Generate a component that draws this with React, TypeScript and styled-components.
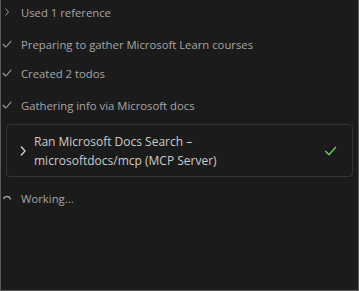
import styled, { createGlobalStyle } from "styled-components";

const GlobalStyle = createGlobalStyle`
	html, body {
		margin: 0;
		padding: 0;
		background: #1b1b1b;
	}
	* {
		box-sizing: border-box;
	}
`;

const Panel = styled.div`
	width: 359px;
	height: 291px;
	background: #1b1b1b;
	border-left: 1px solid #5a5a5a;
	border-right: 1px solid #5a5a5a;
	border-bottom: 1px solid #5a5a5a;
	font-family: "Open Sans", "Noto Sans", sans-serif;
	padding: 0 5px 0 1px;
	display: flex;
	flex-direction: column;
`;

const Step = styled.div<{ $top: number }>`
	display: flex;
	align-items: center;
	height: 20px;
	margin-top: ${(p) => p.$top}px;
	gap: 9px;
	font-size: 11.3px;
	color: #a6a6a6;
`;

const IconSlot = styled.span`
	width: 10px;
	display: flex;
	align-items: center;
	justify-content: center;
`;

const ToolCard = styled.div`
	margin: 9px 0 0 4px;
	height: 53px;
	border: 1px solid #343434;
	border-radius: 4px;
	display: flex;
	align-items: center;
	padding: 0 15px 0 11px;
	gap: 6px;
`;

const CardText = styled.div`
	flex: 1;
	font-size: 12px;
	line-height: 19px;
	color: #cccccc;
`;

const Chevron = ({ color = "#9a9a9a", big = false }: { color?: string; big?: boolean }) =>
	big ? (
		<svg width="8" height="12" viewBox="0 0 8 12">
			<path d="M2 1.5 L6 6 L2 10.5" fill="none" stroke={color} strokeWidth="1.3" />
		</svg>
	) : (
		<svg width="8" height="10" viewBox="0 0 8 10">
			<path d="M2.5 1.5 L5.5 5 L2.5 8.5" fill="none" stroke={color} strokeWidth="1" />
		</svg>
	);

const Check = ({ color = "#9a9a9a", w = 10, h = 8 }: { color?: string; w?: number; h?: number }) => (
	<svg width={w} height={h} viewBox="0 0 10 8">
		<path d="M0.8 4 L3.8 7 L9.3 0.8" fill="none" stroke={color} strokeWidth="1.1" />
	</svg>
);

const Spinner = () => (
	<svg width="10" height="10" viewBox="0 0 10 10">
		<path d="M1.5 6 A3.6 3.6 0 0 1 8.5 6.5" fill="none" stroke="#9a9a9a" strokeWidth="1.4" />
	</svg>
);

const steps = [
	{ id: "ref", icon: "chevron", text: "Used 1 reference", top: 2 },
	{ id: "prep", icon: "check", text: "Preparing to gather Microsoft Learn courses", top: 12 },
	{ id: "todos", icon: "check", text: "Created 2 todos", top: 9 },
	{ id: "info", icon: "check", text: "Gathering info via Microsoft docs", top: 12 },
];

const App = () => {
	return (
		<Panel>
			<GlobalStyle />
			{steps.map((s) => (
				<Step key={s.id} $top={s.top}>
					<IconSlot>{s.icon === "chevron" ? <Chevron /> : <Check />}</IconSlot>
					{s.text}
				</Step>
			))}
			<ToolCard>
				<IconSlot>
					<Chevron color="#d4d4d4" big />
				</IconSlot>
				<CardText>
					Ran Microsoft Docs Search –
					<br />
					microsoftdocs/mcp (MCP Server)
				</CardText>
				<Check color="#5fd35f" w={13} h={10} />
			</ToolCard>
			<Step $top={11}>
				<IconSlot>
					<Spinner />
				</IconSlot>
				Working...
			</Step>
		</Panel>
	);
};

export default App;
